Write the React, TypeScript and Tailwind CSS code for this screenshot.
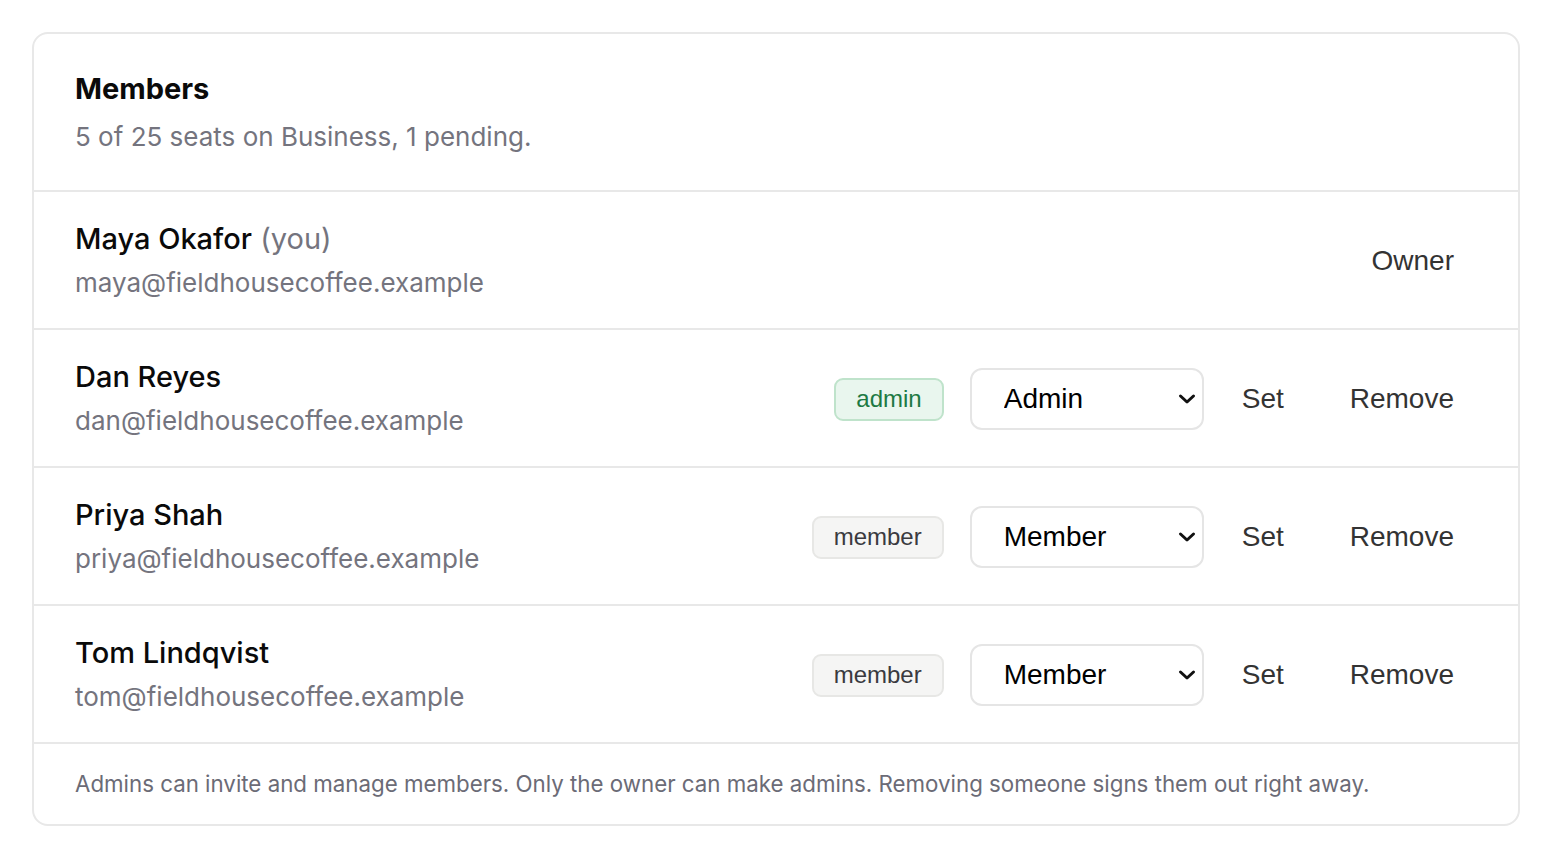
import React from "react";

type Member = {
  name: string;
  email: string;
  role: "owner" | "admin" | "member";
  you?: boolean;
};

const members: Member[] = [
  { name: "Maya Okafor", email: "maya@fieldhousecoffee.example", role: "owner", you: true },
  { name: "Dan Reyes", email: "dan@fieldhousecoffee.example", role: "admin" },
  { name: "Priya Shah", email: "priya@fieldhousecoffee.example", role: "member" },
  { name: "Tom Lindqvist", email: "tom@fieldhousecoffee.example", role: "member" },
];

function RoleBadge({ role }: { role: Member["role"] }) {
  if (role === "admin") {
    return (
      <span className="inline-flex h-[43px] items-center rounded-[9px] border-2 border-[#bfe3cb] bg-[#e9f6ee] px-[20px] font-['Liberation_Sans',sans-serif] text-[24px] text-[#1d7a43]">
        admin
      </span>
    );
  }
  return (
    <span className="inline-flex h-[43px] items-center rounded-[9px] border-2 border-[#e7e7e5] bg-[#f5f5f4] px-[20px] font-['Liberation_Sans',sans-serif] text-[24px] text-[#3a3a3f]">
      member
    </span>
  );
}

function RoleSelect({ value }: { value: string }) {
  return (
    <div className="relative ml-[26px]">
      <select
        defaultValue={value}
        className="h-[62px] w-[234px] appearance-none rounded-[12px] border-2 border-[#e5e5e5] bg-white pl-[32px] pr-[40px] font-['Liberation_Sans',sans-serif] text-[28px] text-black outline-none"
      >
        <option>Admin</option>
        <option>Member</option>
      </select>
      {/* chevron */}
      <svg
        className="pointer-events-none absolute right-[8px] top-1/2 -translate-y-1/2"
        width="18"
        height="12"
        viewBox="0 0 18 12"
        fill="none"
      >
        <path d="M2.5 3L9 9L15.5 3" stroke="#111" strokeWidth="3" strokeLinecap="round" strokeLinejoin="round" />
      </svg>
    </div>
  );
}

function MemberRow({ m }: { m: Member }) {
  return (
    <div className="flex items-center justify-between border-t-2 border-[#e8e8e8] pb-[25px] pl-[41px] pr-[64px] pt-[27px]">
      <div>
        <div className="text-[29px] font-medium leading-[40px] text-[#0a0a0a]">
          {m.name}
          {m.you && <span className="font-normal text-[#74747e]"> (you)</span>}
        </div>
        <div className="mt-[4px] text-[26px] leading-[40px] text-[#74747e]">{m.email}</div>
      </div>
      {m.role === "owner" ? (
        <div className="font-['Liberation_Sans',sans-serif] text-[28px] text-[#333]">Owner</div>
      ) : (
        <div className="flex items-center">
          <RoleBadge role={m.role} />
          <RoleSelect value={m.role === "admin" ? "Admin" : "Member"} />
          <button className="ml-[38px] font-['Liberation_Sans',sans-serif] text-[28px] text-[#333]">Set</button>
          <button className="ml-[66px] font-['Liberation_Sans',sans-serif] text-[28px] text-[#333]">Remove</button>
        </div>
      )}
    </div>
  );
}

export default function App() {
  return (
    <div className="min-h-screen bg-white p-[32px] font-['Inter',sans-serif]">
      <div className="overflow-hidden rounded-[16px] border-2 border-[#e8e8e8]">
        {/* header */}
        <div className="flex flex-col gap-[8px] pb-[33px] pl-[41px] pt-[35px]">
          <div className="text-[29px] font-bold leading-[40px] text-[#0a0a0a]">Members</div>
          <div className="text-[26px] leading-[40px] text-[#74747e]">5 of 25 seats on Business, 1 pending.</div>
        </div>

        {members.map((m) => (
          <MemberRow key={m.email} m={m} />
        ))}

        {/* footer */}
        <div className="border-t-2 border-[#e8e8e8] py-[24px] pl-[41px] text-[22.3px] leading-[32px] text-[#6b6b76]">
          Admins can invite and manage members. Only the owner can make admins. Removing someone signs them out right away.
        </div>
      </div>
    </div>
  );
}
